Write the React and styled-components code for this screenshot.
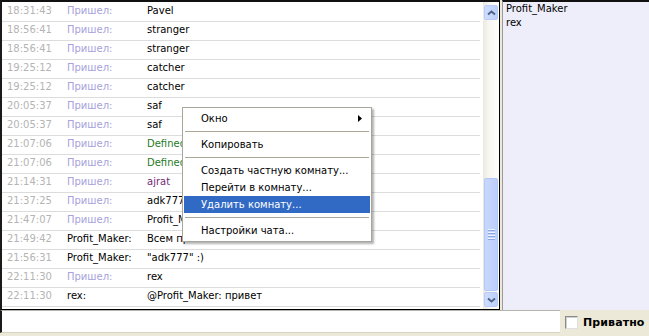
import React from "react";
import styled, { createGlobalStyle } from "styled-components";

const Global = createGlobalStyle`
  html, body { margin: 0; padding: 0; background: #ece9d8; }
  body { font-family: "DejaVu Sans", Tahoma, sans-serif; }
`;

const Window = styled.div`
  width: 649px;
  height: 336px;
  display: flex;
  flex-direction: column;
  background: #ece9d8;
  overflow: hidden;
  position: relative;
  font-family: "DejaVu Sans", Tahoma, sans-serif;
  font-size: 10px;
`;

const Main = styled.div`
  display: flex;
  height: 310px;
`;

const ChatFrame = styled.div`
  width: 500px;
  box-sizing: border-box;
  display: flex;
  background: #fff;
  border-top: 2px solid #111;
  border-left: 2px solid #1a1a1a;
  border-right: 1px solid #000;
  border-bottom: 1px solid #000;
`;

const Messages = styled.div`
  flex: 1;
  padding: 1px 3px 0 0;
`;

const Row = styled.div`
  display: grid;
  grid-template-columns: 60px 80px 1fr;
  height: 18px;
  border-bottom: 1px solid #dcdcdc;
  padding-left: 5px;
  align-items: center;
  line-height: 16px;
  padding-bottom: 0;
  white-space: nowrap;
  overflow: hidden;
`;

const Time = styled.span`
  color: #b4b4b4;
  margin-top: -2px;
`;

const Nick = styled.span`
  color: ${(p) => (p.$join ? "#a6a2dc" : "#000")};
  margin-top: -2px;
`;

const Text = styled.span`
  color: ${(p) => p.$color || "#000"};
  margin-top: -2px;
`;

const ScrollBar = styled.div`
  width: 16px;
  box-sizing: border-box;
  padding: 3px 1px 2px 1px;
  display: flex;
  flex-direction: column;
  background: linear-gradient(to right, #ebe9e0, #f8f7f2 40%, #fdfdfb);
`;

const ScrollButton = styled.div`
  height: 15px;
  box-sizing: border-box;
  border: 1px solid #b9cbf6;
  border-radius: 2px;
  background: linear-gradient(to right, #cfdcfd, #bccffb);
  display: flex;
  align-items: center;
  justify-content: center;
`;

const Track = styled.div`
  flex: 1;
  display: flex;
  flex-direction: column;
  justify-content: flex-end;
  padding-bottom: 1px;
`;

const Thumb = styled.div`
  height: 113px;
  box-sizing: border-box;
  border: 1px solid #b3c7f6;
  border-radius: 2px;
  background: linear-gradient(to right, #c9d8fd, #bccefb);
  display: flex;
  flex-direction: column;
  align-items: center;
  justify-content: center;
  gap: 1px;
`;

const Grip = styled.div`
  width: 7px;
  height: 1px;
  background: #eef3ff;
  box-shadow: 0 1px 0 #8ca6e0;
  margin-bottom: 1px;
`;

const UserList = styled.div`
  flex: 1;
  margin-left: 2px;
  border-top: 2px solid #111;
  border-left: 1px solid #9a9a9a;
  background: #eeeefa;
  padding: 0 3px;
  line-height: 14px;
  color: #000;
`;

const Bottom = styled.div`
  display: flex;
  align-items: center;
  height: 26px;
`;

const InputBox = styled.div`
  width: 560px;
  height: 23px;
  box-sizing: border-box;
  align-self: flex-start;
  background: #fff;
  border-left: 2px solid #1a1a1a;
  border-top: 1px solid #b8b6ac;
  border-bottom: 1px solid #d6d3c6;
`;

const CheckLabel = styled.label`
  display: flex;
  align-items: center;
  gap: 5px;
  margin-left: 5px;
  margin-top: -2px;
  font-family: "DejaVu Sans", Tahoma, sans-serif;
  font-weight: bold;
  font-size: 11px;
  color: #000;
  letter-spacing: 0.1px;
`;

const CheckBox = styled.span`
  width: 13px;
  height: 13px;
  box-sizing: border-box;
  background: #fff;
  border-top: 1px solid #8a8a8a;
  border-left: 1px solid #8a8a8a;
  border-right: 1px solid #e0e0e0;
  border-bottom: 1px solid #e0e0e0;
  box-shadow: inset 1px 1px 0 #d0d0d0;
`;

const Menu = styled.div`
  position: absolute;
  left: 182px;
  top: 107px;
  width: 190px;
  box-sizing: border-box;
  background: #fff;
  border: 1px solid #a7a69a;
  padding: 2px 1px;
  box-shadow: 2px 2px 2px rgba(0, 0, 0, 0.3);
  font-size: 10px;
`;

const MenuItem = styled.div`
  height: 17px;
  display: flex;
  align-items: center;
  padding-left: 17px;
  padding-right: 8px;
  background: ${(p) => (p.$active ? "#316ac5" : "transparent")};
  color: ${(p) => (p.$active ? "#fff" : "#000")};
  white-space: nowrap;
`;

const ItemLabel = styled.span`
  flex: 1;
`;

const Separator = styled.div`
  height: 9px;
  display: flex;
  align-items: center;
  padding: 0 1px;
  &::after {
    content: "";
    flex: 1;
    height: 1px;
    background: #aca899;
  }
`;

const rows = [
  ["18:31:43", "Пришел:", "Pavel"],
  ["18:56:41", "Пришел:", "stranger"],
  ["18:56:41", "Пришел:", "stranger"],
  ["19:25:12", "Пришел:", "catcher"],
  ["19:25:12", "Пришел:", "catcher"],
  ["20:05:37", "Пришел:", "saf"],
  ["20:05:37", "Пришел:", "saf"],
  ["21:07:06", "Пришел:", "Defined", "#1f7a1f"],
  ["21:07:06", "Пришел:", "Defined", "#1f7a1f"],
  ["21:14:31", "Пришел:", "ajrat", "#742a74"],
  ["21:37:25", "Пришел:", "adk777"],
  ["21:47:07", "Пришел:", "Profit_Maker"],
  ["21:49:42", "Profit_Maker:", "Всем привет"],
  ["21:56:31", "Profit_Maker:", "\"adk777\" :)"],
  ["22:11:30", "Пришел:", "rex"],
  ["22:11:30", "rex:", "@Profit_Maker: привет"],
];

const Chevron = ({ down }) => (
  <svg width="9" height="6" viewBox="0 0 9 6">
    <path
      d={down ? "M1 1.5 L4.5 4.5 L8 1.5" : "M1 4.5 L4.5 1.5 L8 4.5"}
      fill="none"
      stroke="#4d6185"
      strokeWidth="1.8"
    />
  </svg>
);

const SubArrow = () => (
  <svg width="4" height="7" viewBox="0 0 4 7">
    <path d="M0 0 L4 3.5 L0 7 Z" fill="#000" />
  </svg>
);

export default function App() {
  return (
    <>
      <Global />
      <Window>
        <Main>
          <ChatFrame>
            <Messages>
              {rows.map(([t, n, m, c], i) => (
                <Row key={i}>
                  <Time>{t}</Time>
                  <Nick $join={n === "Пришел:"}>{n}</Nick>
                  <Text $color={c}>{m}</Text>
                </Row>
              ))}
            </Messages>
            <ScrollBar>
              <ScrollButton>
                <Chevron />
              </ScrollButton>
              <Track>
                <Thumb>
                  <Grip />
                  <Grip />
                  <Grip />
                  <Grip />
                </Thumb>
              </Track>
              <ScrollButton>
                <Chevron down />
              </ScrollButton>
            </ScrollBar>
          </ChatFrame>
          <UserList>
            <div>Profit_Maker</div>
            <div>rex</div>
          </UserList>
        </Main>
        <Bottom>
          <InputBox />
          <CheckLabel>
            <CheckBox />
            Приватно
          </CheckLabel>
        </Bottom>
        <Menu>
          <MenuItem>
            <ItemLabel>Окно</ItemLabel>
            <SubArrow />
          </MenuItem>
          <Separator />
          <MenuItem>
            <ItemLabel>Копировать</ItemLabel>
          </MenuItem>
          <Separator />
          <MenuItem>
            <ItemLabel>Создать частную комнату...</ItemLabel>
          </MenuItem>
          <MenuItem>
            <ItemLabel>Перейти в комнату...</ItemLabel>
          </MenuItem>
          <MenuItem $active>
            <ItemLabel>Удалить комнату...</ItemLabel>
          </MenuItem>
          <Separator />
          <MenuItem>
            <ItemLabel>Настройки чата...</ItemLabel>
          </MenuItem>
        </Menu>
      </Window>
    </>
  );
}
